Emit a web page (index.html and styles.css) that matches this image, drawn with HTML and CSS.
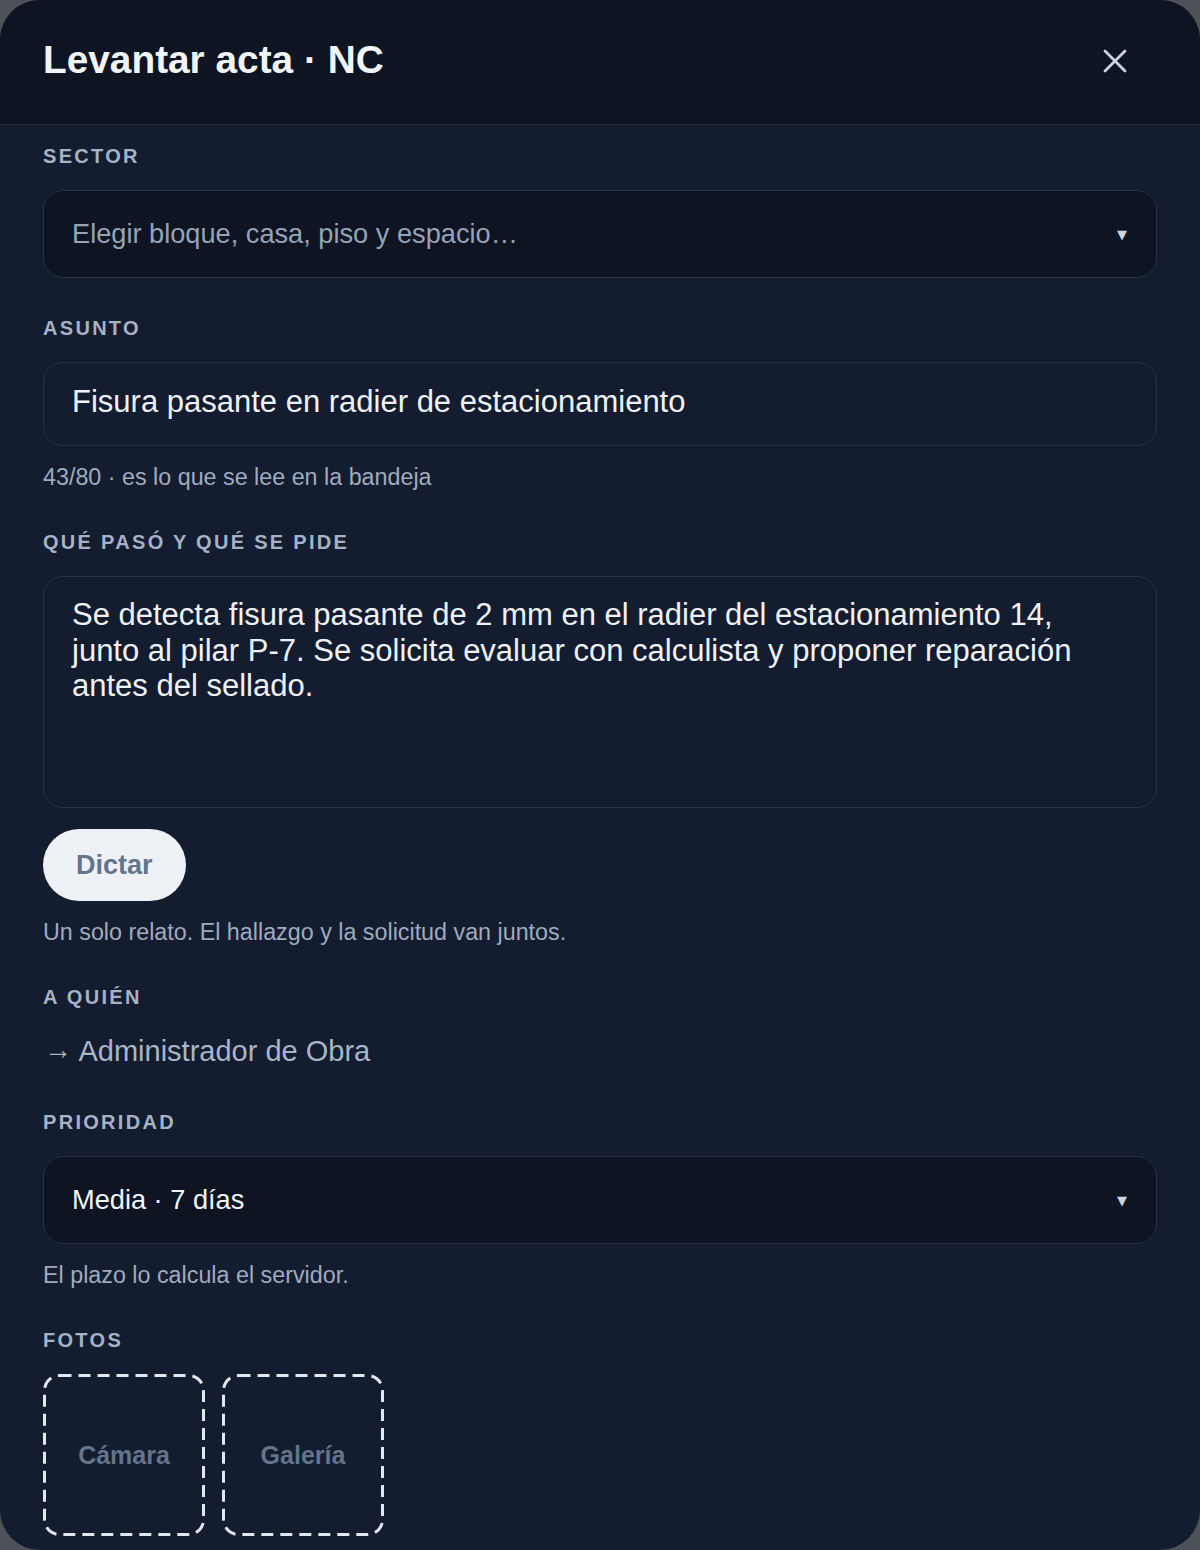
FILE: index.html
```html
<!DOCTYPE html>
<html lang="es">
<head>
   <meta charset="UTF-8">
   <meta name="viewport" content="width=device-width, initial-scale=1.0">
   <title>Levantar acta · NC</title>
   <link rel="stylesheet" href="styles.css">
</head>
<body>
    <div class="hoja">
        <header class="cabecera">
            <h1>Levantar acta · NC</h1>
            <button class="cerrar" aria-label="Cerrar">
                <svg width="24" height="24" viewBox="0 0 24 24">
                    <path d="M2 2 L22 22 M22 2 L2 22" stroke="currentColor" stroke-width="2.8" stroke-linecap="round" fill="none"/>
                </svg>
            </button>
        </header>

        <div class="cuerpo">
            <!-- Sector -->
            <div class="campo">
                <div class="etiqueta">Sector</div>
                <div class="selector vacio">
                    <span>Elegir bloque, casa, piso y espacio…</span>
                    <span class="flecha">▼</span>
                </div>
            </div>

            <!-- Asunto -->
            <div class="campo">
                <div class="etiqueta">Asunto</div>
                <input class="entrada" type="text" value="Fisura pasante en radier de estacionamiento">
                <div class="ayuda">43/80 · es lo que se lee en la bandeja</div>
            </div>

            <!-- Relato -->
            <div class="campo">
                <div class="etiqueta">Qué pasó y qué se pide</div>
                <textarea class="relato">Se detecta fisura pasante de 2 mm en el radier del estacionamiento 14, junto al pilar P-7. Se solicita evaluar con calculista y proponer reparación antes del sellado.</textarea>
                <button class="dictar">Dictar</button>
                <div class="ayuda">Un solo relato. El hallazgo y la solicitud van juntos.</div>
            </div>

            <!-- Destinatario -->
            <div class="campo">
                <div class="etiqueta">A quién</div>
                <div class="destino"><span class="flechita">→</span> Administrador de Obra</div>
            </div>

            <!-- Prioridad -->
            <div class="campo">
                <div class="etiqueta">Prioridad</div>
                <div class="selector">
                    <span>Media · 7 días</span>
                    <span class="flecha">▼</span>
                </div>
                <div class="ayuda">El plazo lo calcula el servidor.</div>
            </div>

            <!-- Fotos -->
            <div class="campo">
                <div class="etiqueta">Fotos</div>
                <div class="fotos">
                    <div class="foto">
                        <svg class="borde" width="162" height="162" viewBox="0 0 162 162">
                            <rect x="1.5" y="1.5" width="159" height="159" rx="15" fill="none" stroke="#e2e8f0" stroke-width="3" stroke-dasharray="12 7"/>
                        </svg>
                        Cámara
                    </div>
                    <div class="foto">
                        <svg class="borde" width="162" height="162" viewBox="0 0 162 162">
                            <rect x="1.5" y="1.5" width="159" height="159" rx="15" fill="none" stroke="#e2e8f0" stroke-width="3" stroke-dasharray="12 7"/>
                        </svg>
                        Galería
                    </div>
                </div>
            </div>
        </div>
    </div>
</body>
</html>
```

FILE: styles.css
```css
body {
    margin: 0;
    background: #4d5259;
    font-family: "Liberation Sans", Arial, sans-serif;
}

/* Hoja del modal */
.hoja {
    width: 1200px;
    height: 1550px;
    background: #141c2f;
    border-radius: 40px;
    overflow: hidden;
}

.cabecera {
    height: 124px;
    background: #0e1421;
    border-bottom: 1px solid #1f2a41;
    display: flex;
    align-items: center;
    justify-content: space-between;
    padding: 0 73px 0 43px;
}

.cabecera h1 {
    margin: 0 0 5px 0;
    font-size: 38.8px;
    font-weight: 700;
    color: #f1f5f9;
}

.cerrar {
    background: none;
    border: none;
    padding: 0;
    color: #cbd5e1;
    display: flex;
    cursor: pointer;
    margin-bottom: 3px;
}

.cuerpo {
    padding: 20px 43px 0 43px;
}

.campo {
    display: flex;
    flex-direction: column;
    align-items: flex-start;
    margin-bottom: 39px;
}

/* Etiquetas */
.etiqueta {
    font-size: 20px;
    line-height: 23px;
    font-weight: 700;
    letter-spacing: 2.3px;
    text-transform: uppercase;
    color: #a6b2c6;
    margin-bottom: 22px;
}

.selector {
    box-sizing: border-box;
    width: 100%;
    height: 88px;
    background: #0e1421;
    border: 1px solid #273249;
    border-radius: 20px;
    display: flex;
    align-items: center;
    justify-content: space-between;
    padding: 0 28px 0 28px;
    font-size: 27.2px;
    color: #f1f5f9;
    cursor: pointer;
}

.selector.vacio {
    color: #94a3b8;
}

.flecha {
    font-size: 13px;
    color: #cbd5e1;
    font-family: "DejaVu Sans", sans-serif;
    margin-right: 1px;
}

.entrada {
    box-sizing: border-box;
    width: 100%;
    height: 84px;
    background: #141c2f;
    border: 1px solid #273249;
    border-radius: 20px;
    padding: 0 28px 4px 28px;
    font-family: "Liberation Sans", Arial, sans-serif;
    font-size: 31px;
    color: #eef2f7;
    outline: none;
}

.relato {
    box-sizing: border-box;
    width: 100%;
    height: 232px;
    background: #141c2f;
    border: 1px solid #273249;
    border-radius: 20px;
    padding: 20px 28px;
    font-family: "Liberation Sans", Arial, sans-serif;
    font-size: 31px;
    line-height: 35.5px;
    color: #eef2f7;
    resize: none;
    outline: none;
    margin-bottom: 21px;
}

.ayuda {
    margin-top: 16px;
    font-size: 23.3px;
    line-height: 30px;
    color: #9fabbf;
}

.dictar {
    height: 72px;
    padding: 0 33px;
    border: none;
    border-radius: 36px;
    background: #eef2f7;
    font-family: "Liberation Sans", Arial, sans-serif;
    font-size: 27px;
    font-weight: 700;
    color: #64748b;
    cursor: pointer;
}

.destino {
    font-size: 29px;
    line-height: 40px;
    color: #a9b5c8;
}

.flechita {
    font-size: 28px;
    margin-left: 1px;
    position: relative;
    top: -2px;
}

/* Fotos */
.fotos {
    display: flex;
    gap: 17px;
}

.foto {
    position: relative;
    width: 162px;
    height: 162px;
    display: flex;
    align-items: center;
    justify-content: center;
    font-size: 25px;
    font-weight: 700;
    color: #64748b;
    cursor: pointer;
}

.foto .borde {
    position: absolute;
    top: 0;
    left: 0;
}
```
